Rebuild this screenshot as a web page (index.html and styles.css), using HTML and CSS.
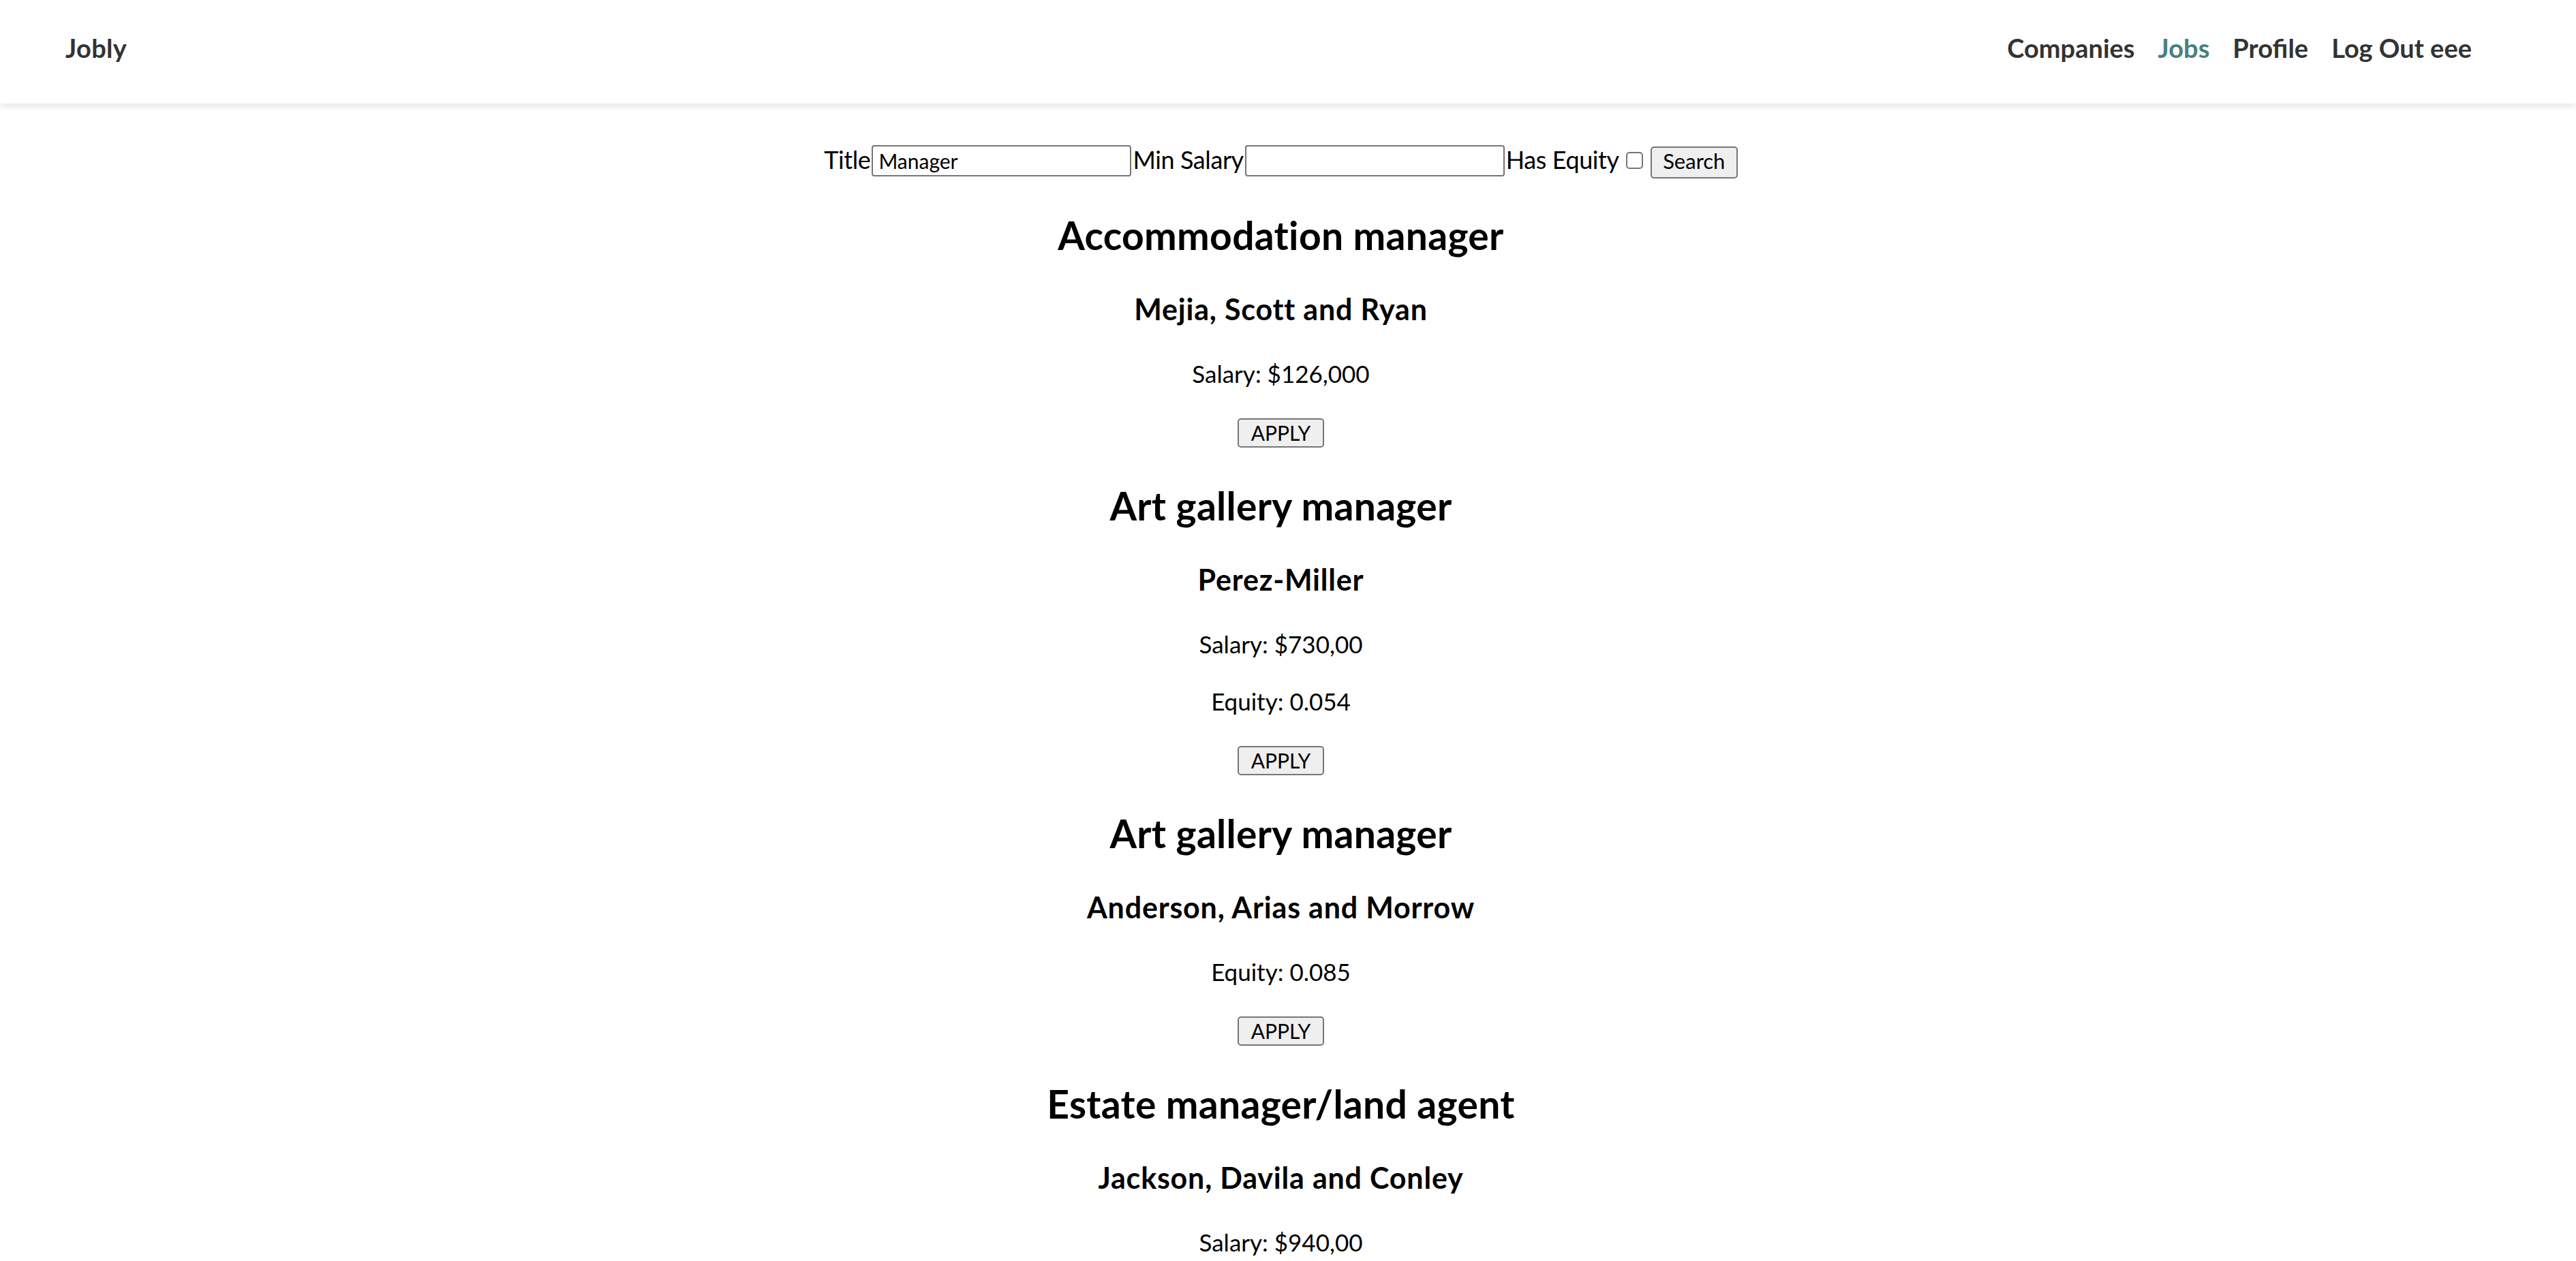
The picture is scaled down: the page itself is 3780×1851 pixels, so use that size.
FILE: index.html
```html
<!DOCTYPE html>
<html lang="en">
<head>
<meta charset="utf-8">
<title>Jobly</title>
<link rel="stylesheet" href="styles.css">
</head>
<body>
<header class="navbar">
  <a class="brand" href="#">Jobly</a>
  <nav class="nav-links">
    <a class="nav-link" href="#">Companies</a>
    <a class="nav-link active" href="#">Jobs</a>
    <a class="nav-link" href="#">Profile</a>
    <a class="nav-link" href="#">Log Out eee</a>
  </nav>
</header>
<main class="page">
  <form class="search-form">
    <label class="field-label" for="title">Title</label>
    <input class="text-input" id="title" type="text" value="Manager">
    <label class="field-label" for="minSalary">Min Salary</label>
    <input class="text-input" id="minSalary" type="text" value="">
    <label class="field-label" for="hasEquity">Has Equity</label>
    <input class="check" id="hasEquity" type="checkbox">
    <button class="btn btn-search" type="button">Search</button>
  </form>

  <section class="job-list">
    <article class="job">
      <h2 class="job-title">Accommodation manager</h2>
      <h3 class="job-company">Mejia, Scott and Ryan</h3>
      <p class="job-info">Salary: $126,000</p>
      <button class="btn btn-apply" type="button">APPLY</button>
    </article>
    <article class="job">
      <h2 class="job-title">Art gallery manager</h2>
      <h3 class="job-company">Perez-Miller</h3>
      <p class="job-info">Salary: $730,00</p>
      <p class="job-info">Equity: 0.054</p>
      <button class="btn btn-apply" type="button">APPLY</button>
    </article>
    <article class="job">
      <h2 class="job-title">Art gallery manager</h2>
      <h3 class="job-company">Anderson, Arias and Morrow</h3>
      <p class="job-info">Equity: 0.085</p>
      <button class="btn btn-apply" type="button">APPLY</button>
    </article>
    <article class="job">
      <h2 class="job-title">Estate manager/land agent</h2>
      <h3 class="job-company">Jackson, Davila and Conley</h3>
      <p class="job-info">Salary: $940,00</p>
      <button class="btn btn-apply" type="button">APPLY</button>
    </article>
  </section>
</main>
</body>
</html>
```

FILE: styles.css
```css
* {
  box-sizing: border-box;
}

html, body {
  margin: 0;
  padding: 0;
  background: #ffffff;
}

body {
  font-family: Lato, "Open Sans", "Noto Sans", sans-serif;
  color: #000000;
}

/* ---------- navbar ---------- */
.navbar {
  display: flex;
  justify-content: space-between;
  align-items: flex-start;
  height: 152px;
  padding: 47px 153px 0 96px;
  background: #ffffff;
  box-shadow: 0 4px 10px rgba(0, 0, 0, 0.10);
  position: relative;
  z-index: 1;
}

.brand,
.nav-link {
  font-size: 38px;
  line-height: 46px;
  font-weight: 700;
  color: #333333;
  text-decoration: none;
}

.brand {
  letter-spacing: 0.3px;
}

.nav-links {
  display: flex;
  gap: 34px;
}

.nav-link.active {
  color: #468080;
}

/* ---------- page ---------- */
.page {
  padding-right: 21px;
}

.search-form {
  display: flex;
  justify-content: center;
  align-items: baseline;
  margin: 61px 0 0;
}

.field-label {
  font-size: 36px;
  line-height: 40px;
  letter-spacing: -0.4px;
}

.text-input {
  width: 381px;
  height: 46px;
  margin: 0 2px;
  padding: 0 8px;
  border: 2px solid #767676;
  border-radius: 4px;
  font-family: Lato, "Open Sans", sans-serif;
  font-size: 30px;
  color: #000000;
  background: #ffffff;
}

.check {
  appearance: none;
  -webkit-appearance: none;
  width: 25px;
  height: 25px;
  margin: 0 11px 3px 10px;
  border: 2px solid #767676;
  border-radius: 5px;
  background: #ffffff;
}

.btn {
  font-family: Lato, "Open Sans", sans-serif;
  color: #000000;
  background: #efefef;
  border: 2px solid #767676;
  border-radius: 5px;
  cursor: pointer;
}

.btn-search {
  width: 128px;
  height: 47px;
  padding: 0 0 4px;
  font-size: 31px;
}

/* ---------- jobs ---------- */
.job-list {
  display: flex;
  flex-direction: column;
  align-items: center;
  margin-top: 49px;
}

.job {
  display: flex;
  flex-direction: column;
  align-items: center;
  margin-bottom: 51px;
}

.job-title {
  margin: 0 0 50px;
  font-size: 57px;
  line-height: 68px;
  font-weight: 700;
  letter-spacing: 0.3px;
}

.job-company {
  margin: 0 0 48px;
  font-size: 43px;
  line-height: 50px;
  font-weight: 700;
  letter-spacing: 0.8px;
}

.job-info {
  margin: 0 0 42px;
  font-size: 35px;
  line-height: 42px;
}

.btn-apply {
  width: 127px;
  height: 43px;
  margin-top: 3px;
  padding: 0;
  font-size: 30px;
}
```
